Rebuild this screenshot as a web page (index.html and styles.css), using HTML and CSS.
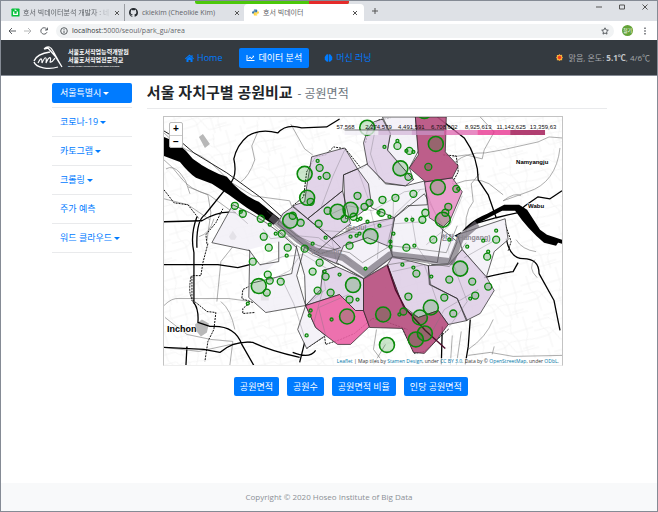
FILE: index.html
```html
<!DOCTYPE html>
<html lang="ko">
<head>
<meta charset="utf-8">
<title>호서 빅데이터</title>
<link rel="stylesheet" href="styles.css">
</head>
<body>
<header class="browser">
  <div class="notice" aria-hidden="true"><span></span></div>
  <div class="tabs">
    <div class="tab tab-first">
      <svg class="icon10" viewBox="0 0 10 10"><rect width="9" height="9" x=".5" y=".5" rx="1" fill="#07c13b"/><path d="M3 4v3h4V4M4 2l2 1" fill="none" stroke="#fff" stroke-width="1.4"/></svg>
      <span class="tab-title fade">호서 빅데이터분석 개발자 : 네이</span><button class="close" aria-label="탭 닫기"><svg viewBox="0 0 6 6"><path d="m1 1 4 4m0-4L1 5"/></svg></button>
    </div>
    <div class="tab tab-second">
      <svg class="icon10" viewBox="0 0 16 16"><path fill="#24292e" d="M8 0C3.58 0 0 3.58 0 8c0 3.54 2.29 6.53 5.47 7.59.4.07.55-.17.55-.38v-1.49c-2.01.37-2.53-.49-2.69-.94-.09-.23-.48-.94-.82-1.13-.28-.15-.68-.52-.01-.53.63-.01 1.08.58 1.23.82.72 1.21 1.87.87 2.33.66.07-.52.28-.87.51-1.07-1.78-.2-3.64-.89-3.64-3.95 0-.87.31-1.59.82-2.15-.08-.2-.36-1.02.08-2.12 0 0 .67-.21 2.2.82a7.5 7.5 0 0 1 4 0c1.53-1.04 2.2-.82 2.2-.82.44 1.1.16 1.92.08 2.12.51.56.82 1.27.82 2.15 0 3.07-1.87 3.75-3.65 3.95.29.25.54.73.54 1.48v2.19c0 .21.15.46.55.38A8 8 0 0 0 16 8c0-4.42-3.58-8-8-8Z"/></svg>
      <span class="tab-title">ckiekim (Cheolkie Kim)</span><button class="close" aria-label="탭 닫기"><svg viewBox="0 0 6 6"><path d="m1 1 4 4m0-4L1 5"/></svg></button>
    </div>
    <div class="tab tab-active">
      <svg class="icon8" viewBox="0 0 16 16"><path fill="#3775a9" d="M5 1h5q2 0 2 2v3q0 2-2 2H6Q4 8 4 10v1H3Q0 11 0 8t3-3h5V4H4V2q0-1 1-1"/><path fill="#ffd43b" d="M11 15H6q-2 0-2-2v-3q0-2 2-2h4q2 0 2-2V5h1q3 0 3 3t-3 3H8v1h4v2q0 1-1 1"/></svg>
      <span class="tab-title">호서 빅데이터</span><button class="close" aria-label="탭 닫기"><svg viewBox="0 0 6 6"><path d="m1 1 4 4m0-4L1 5"/></svg></button>
    </div>
    <button class="new-tab" aria-label="새 탭"><svg viewBox="0 0 6 6"><path d="M3 0v6M0 3h6"/></svg></button>
    <div class="window-buttons">
      <button aria-label="최소화"><svg viewBox="0 0 6 6"><path d="M0 3h6"/></svg></button>
      <button aria-label="최대화"><svg viewBox="0 0 6 6"><path d="M.5 1h5v4h-5z"/></svg></button>
      <button aria-label="닫기"><svg viewBox="0 0 6 6"><path d="m.5.5 5 5m0-5-5 5"/></svg></button>
    </div>
  </div>
  <div class="toolbar">
    <button aria-label="뒤로"><svg viewBox="0 0 8 8"><path d="M8 4H1m3-3L1 4l3 3"/></svg></button>
    <button class="dim" aria-label="앞으로"><svg viewBox="0 0 8 8"><path d="M0 4h7M4 1l3 3-3 3"/></svg></button>
    <button aria-label="새로고침"><svg viewBox="0 0 8 8"><path d="M7 5.2A3.2 3.2 0 1 1 6.6 2L7.3 3M7.4.6V3H5"/></svg></button>
    <div class="address">
      <svg class="info" viewBox="0 0 8 8"><circle cx="4" cy="4" r="3.3"/><path d="M4 3.6V6M4 2v.8"/></svg>
      <span class="url"><b>localhost</b>:5000/seoul/park_gu/area</span>
      <svg class="star" viewBox="0 0 8 8"><path d="m4 .8 1 2.1 2.3.3-1.7 1.6.4 2.3-2-1.1-2 1.1.4-2.3L.7 3.2 3 2.9z"/></svg>
    </div>
    <span class="avatar">철기</span>
    <button class="more" aria-label="메뉴"><svg viewBox="0 0 8 8"><path d="M4 .5v1.4M4 3.3v1.4M4 6.1v1.4"/></svg></button>
  </div>
</header>

<nav class="navbar">
  <a class="brand" href="#">
    <svg class="emblem" viewBox="0 0 30 24"><path d="M1 15C3 10 9 7 17 6M1 16c2 6 15 8 24 5M11 3c4-4 7-2 9 2 3 5 5 10 9 16M11 3l4-1 7 8 7 11" fill="none" stroke="#fff" stroke-width="1.3"/><path d="M5 17c3-6 4-5 4 0 3-7 5-7 4 0 3-7 6-7 4-1 2 1 3-1 5-4" fill="none" stroke="#fff" stroke-width="1.1"/></svg>
    <span class="brand-text"><b>서울호서직업능력개발원</b><b>서울호서직업전문학교</b><small>SEOUL HOSEO OCCUPATIONAL TRAINING COLLEGE</small></span>
  </a>
  <a class="nav-link home" href="#"><svg class="nav-icon" viewBox="0 0 18 16"><path d="M9 1 0 9l1.3 1.3L9 4l7.7 6.3L18 9l-3-2.7V2h-2v2.5zM9 5l-6 5v6h4v-4h4v4h4v-6z"/></svg>Home</a>
  <a class="nav-link current" href="#"><svg class="nav-icon" viewBox="0 0 16 16"><path d="M0 2h2v10h14v2H0zm3 7 4-4 3 3 3-3-1.5-1.5H15V7l-1-1-4 4.5-3-3L4 10z"/></svg>데이터 분석</a>
  <a class="nav-link" href="#"><svg class="nav-icon" viewBox="0 0 16 16"><path d="M7.4 1v14C5 16 3 15 2.5 13 .5 12.500 0 10 .8 8.500-.2 6.500.7 4.500 2.300 4 2.500 1.500 5-.5 7.400 1m1.200 0v14c2.400 1 4.400 0 4.900-2 2-.5 2.500-3 1.700-4.500 1-2 .1-4-1.500-4.500C13.500 1.500 11-.5 8.600 1"/></svg>머신 러닝</a>
  <span class="weather"><svg viewBox="0 0 8 8"><path fill="#f5b23c" d="m4 0 1 1 2-.2V3l1 1-1 1.200V7L5 7 4 8 3 7H1V5L0 4l1-1V1h2z"/><circle cx="4" cy="4" r="2" fill="#f33a1e"/></svg>맑음, 온도: <b>5.1℃</b>, 4/6℃</span>
</nav>

<div class="layout">
  <aside>
    <ul class="side">
      <li><a class="selected" href="#">서울특별시<i></i></a></li>
      <li><a href="#">코로나-19<i></i></a></li>
      <li><a href="#">카토그램<i></i></a></li>
      <li><a href="#">크롤링<i></i></a></li>
      <li><a href="#">주가 예측</a></li>
      <li><a href="#">워드 클라우드<i></i></a></li>
    </ul>
  </aside>
  <main>
    <h1>서울 자치구별 공원비교 <small>- 공원면적</small></h1>
    <div class="map">
      <svg class="canvas" viewBox="163 117 399 249" role="img" aria-label="서울 자치구별 공원면적 지도">
        <defs>
          <pattern id="streets" width="46" height="38" patternUnits="userSpaceOnUse" patternTransform="rotate(-17)"><path d="M0 8h17l5 5h24M0 25h12l9-4 25 4M8 0v14l5 8v16M26 0l-3 12 5 10v16M39 0v18l-5 9v11M0 17l16 1 7 15 23 1M13 5h13M30 31h12" fill="none" stroke="#ececec" stroke-width=".5"/></pattern>
        </defs>
        <rect x="163" y="117" width="399" height="249" fill="#fff"/>
        <rect x="163" y="117" width="399" height="249" fill="url(#streets)"/>
        <g class="patch"><path d="m198 137 4-3 7 10-5 4zM194 325l7-5 7 4-2 9-6 4-5-6zM228 237l4-6 4 6-2 3h-4zM345 228h8v7h-8zM260 293h8v8h-8z"/></g>
        <g class="minor">
          <path d="M163 133q15 15 30 20t35 28l24 15 37 5 6 17M163 160q8 6 17 18t28 17l22 16M165 169q7-4 14 4t8 15l2 6M166 152l5-5 17 10 12 8M187 187l20 8 3 18-4 28M163 199l24 6 22 15M240 182q8-5 14-22l-3-14 6-14M163 306q8-8 15-7h50l22 3M220 302q10 8 14 28M164 318l22 17 24 5 22 2-3 24M216 302l4-40 12-15M163 348l35 4 32-7 20-3M213 219q-4 15-15 18"/>
          <path d="m290 124 14 25 8 6M480 117l14 15-10 18-2 9-16-4-14 2M455 162q12-10 30-9l17-3 36-8 11-5 13 1M560 148q-4 35-32 44l-25 9M455 184q20-8 34 0l14 11M503 201q12-9 18-5M467 240q-5-25 6-38l-2-18 8-10M450 235q-6 20 6 35M385 345l-12 20M376 330l-3 20 12 16M450 366l2-30M456 366l5-34M468 356l22-3 23 4 49-1M492 355l2-8M535 260q-8 8 2 18M468 350q18-12 25-30M516 240q6 10 20 12"/>
        </g>
        <g class="dash"><path d="m163 190 10 13 14 2 11 14M207 244l-5 19-2 13h-9v25l5 7M206 244l-1-9 10-12 7-14M190 277q-4 22 5 26l11 9 9 1-2 17-6 12-3 20M252 303l-11-4 1-9 6-3M247 305l-5 4v5l12-1M292 206l11-9 3-25 9-15 10-2 8-8 12 2 16 20 8-7M443 155l13 1 2 16-6 11 8 10M365 143l3-13 10-10 12-2M505 224l6 18-3 9M306 349l18-12 1 8 15-5 14-6 18-15 13 3 22 8M402 329l12 25 10-2 25-23"/></g>
        <g class="water"><path d="M163 137q16 5 29 22 16 12 34 18 14 18 32 25l21 17-6 6-27-17-18-13-17-11-16-6q-8-6-16-16l-16-6zM458 238q7-15 29-24l17-9h15l8 5 13 20 18 13-2 3-12-3q-16-13-29-32h-13l-35 18-13 7M535 231l27 9v4l-25-7"/></g>
        <g class="road">
          <path d="M196 248q-1-27 8-33l24-30q9-8 5-26 3-14 14-23 13-8 30-3 9-10 24-5l25-1 13-8M163 222l38-1q18-11 34-8M196 217q-7 19-3 36v50q5 7 4 20l12 4q25-2 32 18l12 21M163 265h54l20 3 12-3M163 348l40 2 16 3q14-12 33-10 16 8 47 15M186 347l-1 19M437 117l27 21q14 20 14 42l10 15 8 23-21 6M496 218l21-5 8-7 13-9 12 2 12-8M484 278q22-5 29-6l5-9M506 239q4 20 17 20 16 0 16 15l15 27 6 30M470 320l-2 27-3 18M292 353q17 7 23-2M304 343l-5 20M442 327l-1 38"/>
        </g>
        <path d="M163 131q16 8 30 22l33 20 33 24 22 20" fill="none" stroke="#222" stroke-width="1"/>
        <g class="district">
          <path class="a" d="m211 243 21-38q34 14 64 43l8 28 1 30-40 7-17-15 1-47zM248 250l11 15 19-3V242M249 284l42-10 5-28M305 306l20-16-3-19 14-4-32-20-8 29zM305 306l10 22 10 8-19 13-9-19zM331 239l63-21-5 29 3 10-29 22-27-16zM357 169l10-5 18 20 20 2 20-5 2 24-20 1-13 12-23-10zM382 117h33l3 34-9 17 4 12-26-29 3-18zM394 218l30-24 19 33-6 36-23-4-22-2-3-21zM462 250l-5-15 48-16 3 21-14 12-8 26zM425 190l16 39 16 13-9 22-17 1"/>
          <path class="b" d="m311 157 33-9 13 21-14 6-1 16-35 28-15-13 12-4 2-15zM343 175l14-6 11 15 3 21-13 10-13 4zM342 191l-35 28 24 20 19-15zM367 130l6-8 9-3 8 15-3 16 26 30-8 6-20-3-18-18-4-22zM292 207l15 12 24 20 9 9-20 6-16-8-27-22 5-10zM331 239l32-15 31-6-5 30-37-5-14 22-24-11zM322 271l14-4 27 12v32h-8l-16-16-34 11 15-16zM387 265l5-8 36 9 2 19 27 14 10 22-19 4-10-14-20 7-16-12zM428 266l20-1 14-15 24 27 8 14-14 23-14 7-9-22-28-14z"/>
          <path class="c" d="m424 182 28-4 10 14-12 28-7 7-14-9-2-18z"/>
          <path class="d" d="m305 306 34-11 16 16h8l6 16-19 18h-13l-12-9-10-8z"/>
          <path class="e" d="M415 117h31l-1 35 13 14-6 12-27 4-16-14 9-13zM363 279l24-14 17 45 14 8 20-7 10 14-12 16-12 13-11-1-11-24-33-1-6-17z"/>
        </g>
        <path class="yongsan" d="m336 263 7-17 24-8 22 9 3 10-29 22z"/>
        <g class="river"><path d="m270 217 29 24 15 10 29 7 22 16 25-19 25 3 36 4 9-23 17-15"/></g>
        <g class="riverline"><path d="m266 211 30 25 22 10 31 7 13 10 28-17 25 3 31 4 11-27M269 222l24 22 20 12 29 10 22 13 24-14 25-4 36 6 17-24"/></g>
        <path d="m387 266 8 24 10 19 20 22 20 18" fill="none" stroke="#4c0b2a" stroke-width="1.4"/>
        <g class="inner"><path d="m262 229 8 10 26-3 22 2 33 24M259 266l23-9 21-2 25 15M269 281l20-10 9-13M309 221l15 10 36 2 34-9 29-2M331 214l17-8 24 5 32-19 21-3M345 148l-13 29-12 32M375 128l-5 26 9 26M420 190l-25 24-9 33M426 245l24-20 12-29M411 216l5 30 14 20M392 272l32-7 14 41M453 265l14 37-18 25M478 290l-34 20-15 27M322 291l-9 33M325 336l-7-28 30-13M464 258l30-17M281 279l12 25 11 34M230 209l17 15M393 200l-1 53M370 210l8 33-1 16"/></g>
        <g class="places"><text class="gray" x="347" y="230">Seoul</text><text class="gray" x="311" y="254">Hangang</text><text class="gray" x="441" y="240">한강 (Hangang)</text><text x="516" y="164">Namyangju</text><text x="528" y="208">Wabu</text><text class="large" x="166" y="333">Inchon</text></g>
        <g class="spots big">
          <circle cx="366.700" cy="127.700" r="7.500"/><circle cx="304" cy="174" r="7.500"/><circle cx="306.500" cy="198" r="7.500"/><circle cx="400" cy="168.500" r="7.500"/><circle cx="350" cy="210" r="7.500"/><circle cx="337" cy="212" r="7.500"/><circle cx="289.500" cy="221" r="7.500"/><circle cx="370" cy="236.500" r="7.500"/><circle cx="435.500" cy="144" r="7.500"/><circle cx="437.500" cy="187.500" r="7.500"/><circle cx="442.500" cy="220" r="7.500"/><circle cx="258" cy="286.500" r="7.500"/><circle cx="352.500" cy="285.500" r="7.500"/><circle cx="346.500" cy="317" r="7.500"/><circle cx="382.700" cy="315" r="7.500"/><circle cx="386.500" cy="345.500" r="7.500"/><circle cx="415.500" cy="340" r="7.500"/><circle cx="424.500" cy="334" r="7.500"/><circle cx="419.500" cy="318" r="7.500"/><circle cx="430.500" cy="308" r="7.500"/><circle cx="460" cy="269" r="7.500"/><circle cx="424" cy="111" r="7.500"/>
        </g>
        <g class="spots">
          <circle cx="234" cy="206" r="3.500"/><circle cx="242" cy="214" r="3.500"/><circle cx="260" cy="219" r="3.500"/><circle cx="292" cy="216" r="3.500"/><circle cx="263" cy="237" r="3.500"/><circle cx="281" cy="234" r="3.500"/><circle cx="300" cy="223" r="3.500"/><circle cx="319" cy="168" r="3.500"/><circle cx="326" cy="176" r="3.500"/><circle cx="310" cy="202" r="3.500"/><circle cx="397" cy="146" r="3.500"/><circle cx="409" cy="151" r="3.500"/><circle cx="408" cy="177" r="3.500"/><circle cx="413" cy="194" r="3.500"/><circle cx="395" cy="198" r="3.500"/><circle cx="382" cy="200" r="3.500"/><circle cx="369" cy="203" r="3.500"/><circle cx="357" cy="196" r="3.500"/><circle cx="364" cy="207" r="3.500"/><circle cx="327" cy="211" r="3.500"/><circle cx="344" cy="219" r="3.500"/><circle cx="353" cy="217" r="3.500"/><circle cx="381" cy="213" r="3.500"/><circle cx="422" cy="220" r="3.500"/><circle cx="425" cy="213" r="3.500"/><circle cx="318" cy="224" r="3.500"/><circle cx="428" cy="167" r="3.500"/><circle cx="456" cy="189" r="3.500"/><circle cx="448" cy="207" r="3.500"/><circle cx="445" cy="213" r="3.500"/><circle cx="433" cy="240" r="3.500"/><circle cx="496" cy="240" r="3.500"/><circle cx="268" cy="248" r="3.500"/><circle cx="252" cy="262" r="3.500"/><circle cx="287" cy="248" r="3.500"/><circle cx="267" cy="275" r="3.500"/><circle cx="269" cy="281" r="3.500"/><circle cx="280" cy="282" r="3.500"/><circle cx="266" cy="293" r="3.500"/><circle cx="304" cy="249" r="3.500"/><circle cx="349" cy="246" r="3.500"/><circle cx="406" cy="248" r="3.500"/><circle cx="319" cy="263" r="3.500"/><circle cx="312" cy="272" r="3.500"/><circle cx="325" cy="277" r="3.500"/><circle cx="317" cy="291" r="3.500"/><circle cx="330" cy="293" r="3.500"/><circle cx="349" cy="300" r="3.500"/><circle cx="403" cy="312" r="3.500"/><circle cx="408" cy="297" r="3.500"/><circle cx="416" cy="274" r="3.500"/><circle cx="487" cy="257" r="3.500"/><circle cx="449" cy="280" r="3.500"/><circle cx="472" cy="282" r="3.500"/><circle cx="488" cy="287" r="3.500"/><circle cx="444" cy="298" r="3.500"/><circle cx="475" cy="296" r="3.500"/><circle cx="453" cy="314" r="3.500"/>
        </g>
        <g class="spots">
          <circle cx="269" cy="225" r="1.500"/><circle cx="275" cy="234" r="1.500"/><circle cx="240" cy="212" r="1.500"/><circle cx="317" cy="161" r="1.500"/><circle cx="319" cy="178" r="1.500"/><circle cx="384" cy="147" r="1.500"/><circle cx="397" cy="141" r="1.500"/><circle cx="406" cy="151" r="1.500"/><circle cx="413" cy="152" r="1.500"/><circle cx="360" cy="219" r="1.500"/><circle cx="357" cy="220" r="1.500"/><circle cx="367" cy="222" r="1.500"/><circle cx="378" cy="213" r="1.500"/><circle cx="389" cy="217" r="1.500"/><circle cx="406" cy="220" r="1.500"/><circle cx="412" cy="220" r="1.500"/><circle cx="379" cy="226" r="1.500"/><circle cx="393" cy="234" r="1.500"/><circle cx="325" cy="238" r="1.500"/><circle cx="350" cy="237" r="1.500"/><circle cx="356" cy="236" r="1.500"/><circle cx="359" cy="234" r="1.500"/><circle cx="458" cy="189" r="1.500"/><circle cx="449" cy="240" r="1.500"/><circle cx="496" cy="231" r="1.500"/><circle cx="483" cy="241" r="1.500"/><circle cx="286" cy="256" r="1.500"/><circle cx="247" cy="304" r="1.500"/><circle cx="312" cy="244" r="1.500"/><circle cx="414" cy="246" r="1.500"/><circle cx="390" cy="242" r="1.500"/><circle cx="390" cy="247" r="1.500"/><circle cx="365" cy="269" r="1.500"/><circle cx="324" cy="272" r="1.500"/><circle cx="339" cy="275" r="1.500"/><circle cx="357" cy="300" r="1.500"/><circle cx="310" cy="311" r="1.500"/><circle cx="309" cy="316" r="1.500"/><circle cx="331" cy="320" r="1.500"/><circle cx="306" cy="336" r="1.500"/><circle cx="399" cy="315" r="1.500"/><circle cx="413" cy="268" r="1.500"/><circle cx="402" cy="265" r="1.500"/><circle cx="488" cy="252" r="1.500"/><circle cx="467" cy="247" r="1.500"/><circle cx="431" cy="277" r="1.500"/><circle cx="470" cy="299" r="1.500"/>
        </g>
        <g class="legend">
          <path fill="#f1eef6" d="M344 130h34v5h-34z"/><path fill="#d4b9da" d="M378 130h33v5h-33z"/><path fill="#c994c7" d="M411 130h33v5h-33z"/><path fill="#df65b0" d="M444 130h33v5h-33z"/><path fill="#e7298a" d="M477 130h33v5h-33z"/><path fill="#980043" d="M510 130h35v5h-35z"/>
        </g>
        <path d="M344 130h100" stroke="#333" stroke-width=".7"/>
        <g class="ticks"><text x="345" y="129">57,568</text><text x="378" y="129">2,274,579</text><text x="411" y="129">4,491,591</text><text x="444" y="129">6,708,602</text><text x="478" y="129">8,925,613</text><text x="511" y="129">11,142,625</text><text x="543" y="129">13,359,63</text></g>
      </svg>
      <div class="zoom"><button aria-label="확대">+</button><button aria-label="축소">−</button></div>
      <div class="credit"><a href="#">Leaflet</a> | Map tiles by <a href="#">Stamen Design</a>, under <a href="#">CC BY 3.0</a>. Data by © <a href="#">OpenStreetMap</a>, under <a href="#">ODbL</a>.</div>
    </div>
    <div class="actions"><button>공원면적</button><button>공원수</button><button>공원면적 비율</button><button>인당 공원면적</button></div>
  </main>
</div>
<footer>Copyright © 2020 Hoseo Institute of Big Data</footer>
</body>
</html>
```
FILE: styles.css
```css
* { box-sizing: border-box; }
body {
  margin: 0;
  min-height: 100vh;
  display: flex;
  flex-direction: column;
  border: 1px solid #858b95;
  background: #fff;
  color: #212529;
  font: 9px/14px "Open Sans", "Noto Sans CJK KR", sans-serif;
}
a { color: #007bff; text-decoration: none; }
button { border: 0; padding: 0; background: none; font: inherit; color: inherit; }
svg { display: block; flex: none; }

.browser { position: relative; color: #5f6368; font-size: 7px; line-height: 12px; }
.browser button svg { width: 6px; height: 6px; fill: none; stroke: #555; stroke-width: 1; }
.notice { position: absolute; top: -1px; left: 194px; width: 154px; height: 4px; background: #4cc80a; border-radius: 0 0 2px 2px; overflow: hidden; }
.notice span { display: block; width: 40px; height: 4px; margin-left: auto; background: #e52b2b; }
.tabs { display: flex; align-items: flex-end; height: 20px; background: #dee1e6; padding-left: 2px; }
.tab { display: flex; align-items: center; height: 17px; gap: 4px; padding: 0 4px 0 8px; white-space: nowrap; }
.tab-first { width: 122px; border-right: 1px solid #9a9da2; gap: 3px; }
.tab-second { width: 119px; padding: 0 4px; }
.tab-active { width: 120px; padding-right: 6px; background: #fff; border-radius: 4px 4px 0 0; }
.tab-title { flex: 1; min-width: 0; }
.fade { mask-image: linear-gradient(90deg, #000 80%, transparent); }
.icon10 { width: 9px; height: 9px; }
.icon8 { width: 7px; height: 7px; }
.new-tab { align-self: center; margin-left: 8px; }
.window-buttons { display: flex; gap: 17px; margin-left: auto; padding: 0 9px; align-self: flex-start; height: 12px; align-items: center; }
.toolbar { display: flex; align-items: center; height: 19px; gap: 8px; padding: 0 8px 0 7px; }
.toolbar button svg, .info, .star { width: 8px; height: 8px; fill: none; stroke: #4b4f54; stroke-width: .9; }
.toolbar .dim { opacity: .45; }
.toolbar .more svg { stroke-width: 1.3; }
.address { flex: 1; display: flex; align-items: center; gap: 4px; height: 14px; padding: 0 5px 0 4px; border-radius: 7px; background: #f1f3f4; }
.url b { color: #35383c; font-weight: 400; }
.star { margin-left: auto; }
.avatar { width: 11px; height: 11px; border-radius: 50%; background: #64a338; color: #fff; font-size: 5px; line-height: 11px; text-align: center; }

.navbar { display: flex; align-items: center; height: 36px; padding: 0 7px 0 32px; background: #343a40; border-bottom: 1px solid #858b95; white-space: nowrap; }
.brand { display: flex; align-items: center; gap: 5px; color: #fff; margin-right: 48px; }
.emblem { width: 30px; height: 24px; }
.brand-text { display: grid; width: 62px; font-size: 6px; line-height: 8px; }
.brand-text small { font: 700 2px/4px "Liberation Sans", sans-serif; }
.nav-link { display: flex; align-items: center; gap: 3px; height: 20px; padding: 0 7px; border-radius: 2px; margin-right: 8px; }
.home { margin-right: 10px; }
.nav-icon { width: 9px; height: 8px; fill: currentColor; }
.current { background: #007bff; color: #fff; }
.weather { display: flex; align-items: center; margin-left: auto; color: #a4a8ac; white-space: pre; font-size: 8px; }
.weather svg { width: 7px; height: 7px; margin-right: 6px; }
.weather b { color: #c4c7ca; }

.layout { flex: 1; display: grid; grid-template-columns: 13.2% 76%; column-gap: 15px; padding: 7px 0 0 51px; align-items: start; }
.side { list-style: none; margin: 0; padding: 0; }
.side li { padding-bottom: 4px; margin-bottom: 4px; border-bottom: 1px solid #e9eaec; }
.side a { display: flex; align-items: center; gap: 2px; height: 20px; padding: 0 8px; border-radius: 2px; white-space: nowrap; }
.side i { border: 3px solid transparent; border-top-color: currentColor; border-bottom: 0; }
.side .selected { background: #007bff; color: #fff; }
h1 { margin: 0 0 7px; padding-bottom: 5px; border-bottom: 1px solid #e9eaec; font-size: 15px; line-height: 18px; font-weight: 700; white-space: nowrap; }
h1 small { margin-left: 1px; font-size: 12px; font-weight: 400; color: #6c757d; }

.map { position: relative; width: 87%; margin-left: 16px; border: 1px solid #c3c3c3; border-bottom-color: #eee; overflow: hidden; }
.canvas { width: 100%; height: auto; }
.canvas path { stroke-linejoin: round; }
.patch { fill: #b8b8b8; }
.minor { fill: none; stroke: #777; stroke-width: .6; }
.dash { fill: none; stroke: #111; stroke-width: 1; stroke-dasharray: 2 1; }
.water { fill: #000; }
.road { fill: none; stroke: #000; stroke-width: 1.3; }
.district { stroke: #222; stroke-width: .7; }
.a { fill: #f1eef6; fill-opacity: .78; }
.b { fill: #dccbe4; fill-opacity: .82; }
.c { fill: #e794c8; fill-opacity: .9; }
.d { fill: #eb62a5; fill-opacity: .9; }
.e { fill: #b64c7d; fill-opacity: .9; }
.yongsan { fill: #f4f1f8; stroke: #222; stroke-width: .7; }
.river { fill: none; stroke: #6b6670; stroke-width: 7; stroke-opacity: .65; }
.riverline { fill: none; stroke: #555; stroke-width: .7; stroke-opacity: .7; }
.inner { fill: none; stroke: #77727c; stroke-width: .6; stroke-opacity: .6; }
.places { font: 700 6px "Liberation Sans", sans-serif; stroke: #fff; stroke-width: 1; paint-order: stroke; }
.places .gray { fill: #8d8891; stroke: none; font-family: "Liberation Sans", "Noto Sans CJK KR", sans-serif; font-size: 7px; }
.places .large { font-size: 9px; }
.spots { fill: #008000; fill-opacity: .2; stroke: #0a8a0a; stroke-width: 1.3; }
.big { stroke-width: 1.6; }
.legend { opacity: .75; }
.ticks { font: 6px "Liberation Sans", sans-serif; text-anchor: middle; fill: #111; }
.zoom { position: absolute; top: 5px; left: 5px; display: grid; border: 1px solid #bbb; border-radius: 2px; background: #fff; }
.zoom button { width: 12px; height: 12px; font: 700 10px/12px "Liberation Sans", sans-serif; color: #000; }
.zoom button + button { border-top: 1px solid #ccc; }
.credit { position: absolute; right: 0; bottom: 0; padding: 0 3px; background: rgba(255, 255, 255, .7); color: #333; font: 5px/7px "Open Sans", sans-serif; white-space: nowrap; }
.credit a { color: #0078a8; }
.actions { display: flex; gap: 8px; padding: 11px 0 0 87px; white-space: nowrap; }
.actions button { height: 19px; padding: 0 6px; border-radius: 2px; background: #007bff; color: #fff; }
footer { height: 28px; background: #f8f9fa; color: #8b9096; font-size: 8px; line-height: 28px; text-align: center; }
```
